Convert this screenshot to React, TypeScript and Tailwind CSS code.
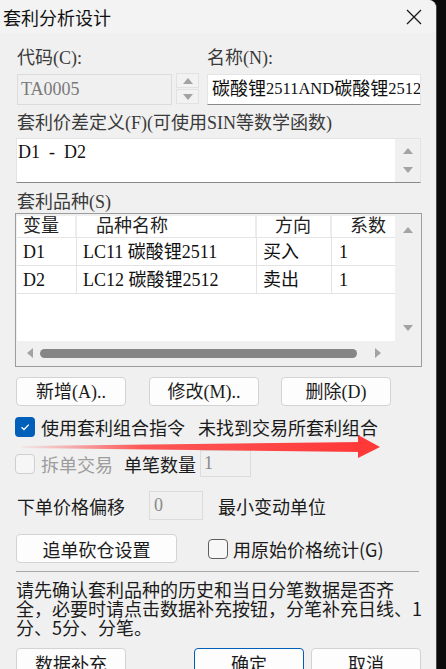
import React from "react";

const SERIF = "font-['Liberation_Serif','Noto_Sans_CJK_SC',serif]";
const SANS = "font-['Noto_Sans_CJK_SC','Noto_Sans',sans-serif]";

function Tri({ dir, className = "" }: { dir: "up" | "down" | "left" | "right"; className?: string }) {
  const pts =
    dir === "up"
      ? "0,7 5,1 10,7"
      : dir === "down"
      ? "0,1 10,1 5,7"
      : dir === "left"
      ? "7,0 7,10 1,5"
      : "1,0 1,10 7,5";
  const vb = dir === "up" || dir === "down" ? "0 0 10 8" : "0 0 8 10";
  const w = dir === "up" || dir === "down" ? 10 : 8;
  const h = dir === "up" || dir === "down" ? 8 : 10;
  return (
    <svg width={w} height={h} viewBox={vb} className={className}>
      <polygon points={pts} fill="#a3a3a3" />
    </svg>
  );
}

function Check({ checked, disabled }: { checked?: boolean; disabled?: boolean }) {
  if (checked) {
    return (
      <div className="w-[20px] h-[20px] rounded-[4px] bg-[#005fb8] flex items-center justify-center shrink-0">
        <svg width="12" height="12" viewBox="0 0 12 12">
          <path d="M2.5 6.2 L5 8.5 L9.8 3.6" stroke="#fff" strokeWidth="1.3" fill="none" />
        </svg>
      </div>
    );
  }
  return (
    <div
      className={
        disabled
          ? "w-[20px] h-[20px] rounded-[4px] border border-[#cfcfcf] bg-[#f6f6f6] shrink-0"
          : "w-[20px] h-[20px] rounded-[4px] border border-[#5f5f5f] bg-[#f7f7f7] shrink-0"
      }
    />
  );
}

function Btn({ children, w, font, focused }: { children: React.ReactNode; w: string; font: string; focused?: boolean }) {
  return (
    <div
      className={`${w} ${font} h-[29px] rounded-[4px] bg-[#fdfdfd] border ${
        focused ? "border-[#005fb8]" : "border-[#d3d3d3]"
      } flex items-center justify-center text-[18px] leading-[20px] text-[#1b1b1b] shrink-0`}
    >
      {children}
    </div>
  );
}

export default function App() {
  const rows = [
    ["D1", "LC11 碳酸锂2511", "买入", "1"],
    ["D2", "LC12 碳酸锂2512", "卖出", "1"],
  ];
  return (
    <div className="w-[446px] h-[669px] flex bg-[#0b0b0b] overflow-hidden">
      <div className="w-[437px] h-full bg-[#f0f0f0] rounded-tr-[8px] border-r border-[#4a4a4a] flex flex-col relative shrink-0">
        {/* title bar */}
        <div className="h-[33px] bg-[#f3f3f3] rounded-tr-[8px] flex items-center justify-between pl-[3px] pr-[14px] shrink-0">
          <span className={`${SANS} text-[18px] leading-[20px] text-[#111]`}>套利分析设计</span>
          <svg width="16" height="16" viewBox="0 0 16 16">
            <path d="M1 1 L15 15 M15 1 L1 15" stroke="#1a1a1a" strokeWidth="1.3" />
          </svg>
        </div>

        <div className="pl-[16px] flex flex-col text-[#1b1b1b]">
          {/* labels row */}
          <div className={`${SERIF} flex mt-[15px] text-[18px] leading-[20px] text-[#3a3a3a]`}>
            <span className="w-[191px] pl-[1px]">代码(C):</span>
            <span>名称(N):</span>
          </div>
          {/* inputs row */}
          <div className="flex mt-[6px] items-start">
            <div className={`${SERIF} w-[155px] h-[31px] ml-[1px] border border-[#dcdcdc] bg-[#f0f0f0] flex items-center pl-[3px] text-[18px] text-[#7a7a7a]`}>
              TA0005
            </div>
            <div className="ml-[4px] mt-[-1px] flex flex-col gap-[1px]">
              <div className="w-[23px] h-[15px] border border-[#e2e2e2] bg-[#f2f2f2] flex items-center justify-center">
                <Tri dir="up" />
              </div>
              <div className="w-[23px] h-[15px] border border-[#e2e2e2] bg-[#f2f2f2] flex items-center justify-center">
                <Tri dir="down" />
              </div>
            </div>
            <div className={`${SERIF} ml-[8px] w-[214px] h-[31px] bg-white border border-[#e5e5e5] border-b-[#8a8a8a] flex items-center pl-[4px] text-[18px] text-[#111] whitespace-nowrap overflow-hidden`}>
              碳酸锂<span className="text-[16.5px]">2511AND</span>碳酸锂<span className="text-[16.5px]">2512</span>
            </div>
          </div>

          <div className={`${SERIF} mt-[8px] text-[18px] leading-[20px] text-[#3a3a3a] pl-[1px]`}>
            套利价差定义(F)(可使用SIN等数学函数)
          </div>

          {/* textarea */}
          <div className="mt-[5px] w-[405px] h-[45px] bg-white border border-[#e3e3e3] border-b-[#8a8a8a] flex">
            <div className={`${SERIF} flex-1 pl-[1px] pt-[3px] text-[18px] leading-[20px] text-[#111] whitespace-pre`}>D1  -  D2</div>
            <div className="w-[25px] h-full bg-[#f0f0f0] flex flex-col items-center justify-between py-[8px]">
              <Tri dir="up" />
              <Tri dir="down" />
            </div>
          </div>

          <div className={`${SERIF} mt-[9px] text-[18px] leading-[20px] text-[#3a3a3a] pl-[1px]`}>套利品种(S)</div>

          {/* table */}
          <div className="mt-[1px] ml-[-1px] w-[407px] h-[154px] border border-[#9c9c9c] bg-[#f0f0f0] flex flex-col pt-[2px] pl-[1px]">
            <div className="flex h-[125px]">
              <div className="w-[378px] h-full bg-white flex flex-col">
                <div className={`${SERIF} grid grid-cols-[60px_180px_75px_63px] h-[22px] border-b border-[#e5e5e5] text-[18px] leading-[20px] text-[#222] overflow-hidden`}>
                  <div className="pl-[6px] border-r-2 border-[#ececec]">变量</div>
                  <div className="pl-[19px] border-r-2 border-[#ececec]">品种名称</div>
                  <div className="pl-[18px] border-r-2 border-[#ececec]">方向</div>
                  <div className="pl-[18px] whitespace-nowrap">系数</div>
                </div>
                {rows.map((r) => (
                  <div
                    key={r[0]}
                    className={`${SERIF} grid grid-cols-[60px_180px_75px_63px] h-[28px] border-b border-[#e3e3e3] text-[18px] leading-[20px] text-[#111] items-center`}
                  >
                    <div className="pl-[6px] h-full flex items-center border-r border-[#e3e3e3]">{r[0]}</div>
                    <div className="pl-[6px] h-full flex items-center border-r border-[#e3e3e3] whitespace-pre">{r[1]}</div>
                    <div className="pl-[6px] h-full flex items-center border-r border-[#e3e3e3]">{r[2]}</div>
                    <div className="pl-[7px] h-full flex items-center">{r[3]}</div>
                  </div>
                ))}
              </div>
              <div className="w-[25px] h-full flex flex-col items-center justify-between pt-[10px] pb-[9px]">
                <Tri dir="up" />
                <Tri dir="down" />
              </div>
            </div>
            <div className="h-[24px] flex items-center pl-[9px]">
              <Tri dir="left" />
              <div className="ml-[6px] w-[317px] h-[9px] rounded-full bg-[#868686]" />
              <Tri dir="right" className="ml-[17px]" />
            </div>
          </div>

          {/* buttons row */}
          <div className="mt-[10px] flex">
            <Btn w="w-[110px]" font={SERIF}>新增(A)..</Btn>
            <div className="ml-[23px]">
              <Btn w="w-[110px]" font={SERIF}>修改(M)..</Btn>
            </div>
            <div className="ml-[22px]">
              <Btn w="w-[110px]" font={SERIF}>删除(D)</Btn>
            </div>
          </div>

          {/* checkbox row 1 */}
          <div className={`${SANS} mt-[11px] flex items-center h-[20px] ml-[-1px] text-[18px] leading-[20px] text-[#1b1b1b] whitespace-nowrap`}>
            <Check checked />
            <span className="ml-[6px]">使用套利组合指令</span>
            <span className="ml-[13px]">未找到交易所套利组合</span>
          </div>

          {/* row 2 */}
          <div className={`${SANS} mt-[13px] flex items-center h-[27px] ml-[-1px] text-[18px] leading-[20px]`}>
            <Check disabled />
            <span className="ml-[6px] text-[#9d9d9d]">拆单交易</span>
            <span className="ml-[11px] text-[#1b1b1b]">单笔数量</span>
            <div className={`${SERIF} ml-[4px] w-[51px] h-[27px] border border-[#dcdcdc] bg-[#f0f0f0] pl-[3px] text-[18px] leading-[24px] text-[#8a8a8a]`}>1</div>
          </div>

          {/* row 3 */}
          <div className={`${SANS} mt-[14px] flex items-center h-[29px] text-[18px] leading-[20px] text-[#1b1b1b]`}>
            <span className="pl-[1px] w-[133px]">下单价格偏移</span>
            <div className={`${SERIF} w-[54px] h-[29px] border border-[#dcdcdc] bg-[#f0f0f0] pl-[4px] text-[18px] leading-[26px] text-[#8a8a8a]`}>0</div>
            <span className="ml-[15px]">最小变动单位</span>
          </div>

          {/* row 4 */}
          <div className="mt-[14px] flex items-center">
            <Btn w="w-[161px]" font={SANS}>追单砍仓设置</Btn>
            <div className="ml-[31px]">
              <Check />
            </div>
            <span className={`${SANS} ml-[5px] text-[18px] leading-[20px] text-[#1b1b1b]`}>用原始价格统计(G)</span>
          </div>

          {/* separator */}
          <div className="mt-[8px] w-[403px] h-px bg-[#a8a8a8]" />

          {/* paragraph */}
          <div className={`${SANS} mt-[8px] text-[18px] leading-[19px] text-[#1b1b1b] whitespace-nowrap`}>
            请先确认套利品种的历史和当日分笔数据是否齐
            <br />
            全，必要时请点击数据补充按钮，分笔补充日线、1
            <br />
            分、5分、分笔。
          </div>

          {/* bottom buttons */}
          <div className="mt-[11px] flex">
            <Btn w="w-[110px]" font={SANS}>数据补充</Btn>
            <div className="ml-[68px]">
              <Btn w="w-[110px]" font={SANS} focused>确定</Btn>
            </div>
            <div className="ml-[7px]">
              <Btn w="w-[110px]" font={SANS}>取消</Btn>
            </div>
          </div>
        </div>

        {/* red arrow annotation */}
        <svg className="absolute left-0 top-[430px]" width="400" height="32" viewBox="0 430 400 32">
          <defs>
            <linearGradient id="arrowGrad" x1="22" y1="0" x2="362" y2="0" gradientUnits="userSpaceOnUse">
              <stop offset="0" stopColor="#ff3c3c" stopOpacity="0.05" />
              <stop offset="0.35" stopColor="#ff3c3c" stopOpacity="0.85" />
              <stop offset="1" stopColor="#ff3838" stopOpacity="1" />
            </linearGradient>
          </defs>
          <polygon points="22,446 362,442 362,452 22,448" fill="url(#arrowGrad)" />
          <polygon points="358,435 380,447 358,458" fill="#ff3838" />
        </svg>
      </div>
      <div className="flex-1 h-full bg-[#0b0b0b]" />
    </div>
  );
}
